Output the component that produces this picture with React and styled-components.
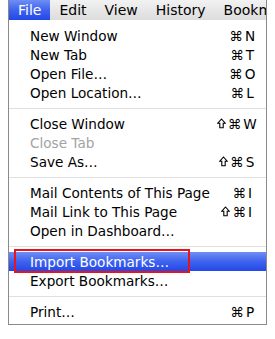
import styled, { createGlobalStyle, css } from "styled-components";

const GlobalStyle = createGlobalStyle`
  body {
    margin: 0;
    background: #fff;
    font-family: "DejaVu Sans", "Liberation Sans", sans-serif;
  }
`;

const sections = [
  [
    { label: "New Window", keyName: "N" },
    { label: "New Tab", keyName: "T" },
    { label: "Open File…", keyName: "O" },
    { label: "Open Location…", keyName: "L" },
  ],
  [
    { label: "Close Window", shift: true, keyName: "W" },
    { label: "Close Tab", disabled: true },
    { label: "Save As…", shift: true, keyName: "S" },
  ],
  [
    { label: "Mail Contents of This Page", keyName: "I" },
    { label: "Mail Link to This Page", shift: true, keyName: "I" },
    { label: "Open in Dashboard…" },
  ],
  [
    { label: "Import Bookmarks…", active: true, marked: true },
    { label: "Export Bookmarks…" },
  ],
  [{ label: "Print…", keyName: "P" }],
];

const menus = ["File", "Edit", "View", "History", "Bookmarks"];

function ShiftIcon() {
  return (
    <ShiftSvg width="9" height="11" viewBox="0 0 9 11">
      <path
        d="M4.5 1 L8.2 5.2 H6.2 V9.8 H2.8 V5.2 H0.8 Z"
        fill="none"
        stroke="currentColor"
        strokeWidth="1.1"
      />
    </ShiftSvg>
  );
}

function App() {
  return (
    <>
      <GlobalStyle />
      <Frame>
        <MenuBar>
          {menus.map((m, i) => (
            <BarItem key={m} $open={i === 0}>
              {m}
            </BarItem>
          ))}
        </MenuBar>
        <Panel>
          {sections.map((items, si) => (
            <Section key={si} $first={si === 0}>
              {items.map((item) => (
                <Row key={item.label} $active={item.active} $disabled={item.disabled}>
                  <Label>{item.label}</Label>
                  {item.keyName && (
                    <KeyCell>
                      <Mods>
                        {item.shift && <ShiftIcon />}
                        <span>⌘</span>
                      </Mods>
                      <span>{item.keyName}</span>
                    </KeyCell>
                  )}
                  {item.marked && <Marker />}
                </Row>
              ))}
            </Section>
          ))}
        </Panel>
      </Frame>
    </>
  );
}

const Frame = styled.div`
  width: 259px;
  margin-left: 8px;
`;

const MenuBar = styled.div`
  display: flex;
  height: 20px;
  overflow: hidden;
  white-space: nowrap;
  box-sizing: border-box;
  border-left: 1px solid #8a8a8a;
  border-right: 1px solid #8a8a8a;
  background: linear-gradient(#f2f2f2, #dcdcdc);
  font-size: 14px;
  line-height: 20px;
`;

const blueFill = css`
  background: linear-gradient(#6f8ef4, #3f63ee 50%, #2348e8);
  color: #fff;
`;

const BarItem = styled.div`
  padding: 0 9px;
  color: #000;
  ${(p) => p.$open && blueFill}
`;

const Panel = styled.div`
  border: 1px solid #8a8a8a;
  border-top: none;
  padding: 6px 0 3px;
  background: #fff;
`;

const Section = styled.div`
  ${(p) =>
    !p.$first &&
    css`
      margin-top: 6px;
      padding-top: 5px;
      border-top: 1px solid #e0e0e0;
    `}
`;

const Row = styled.div`
  position: relative;
  display: flex;
  align-items: center;
  height: 19px;
  padding: 0 8px 0 21px;
  font-size: 13.6px;
  color: ${(p) => (p.$disabled ? "#a3a3a3" : "#000")};
  ${(p) => p.$active && blueFill}
`;

const Label = styled.span`
  flex: 1;
  white-space: nowrap;
`;

const KeyCell = styled.span`
  display: flex;
  justify-content: center;
  width: 18px;
`;

const Mods = styled.span`
  display: flex;
  align-items: center;
  justify-content: flex-end;
  gap: 2px;
  width: 0;
  margin-right: 2px;
  white-space: nowrap;
`;

const ShiftSvg = styled.svg`
  flex-shrink: 0;
  display: block;
`;

const Marker = styled.div`
  position: absolute;
  left: 5px;
  top: -3px;
  width: 172px;
  height: 20px;
  border: 2px solid #e8141b;
`;

export default App;
